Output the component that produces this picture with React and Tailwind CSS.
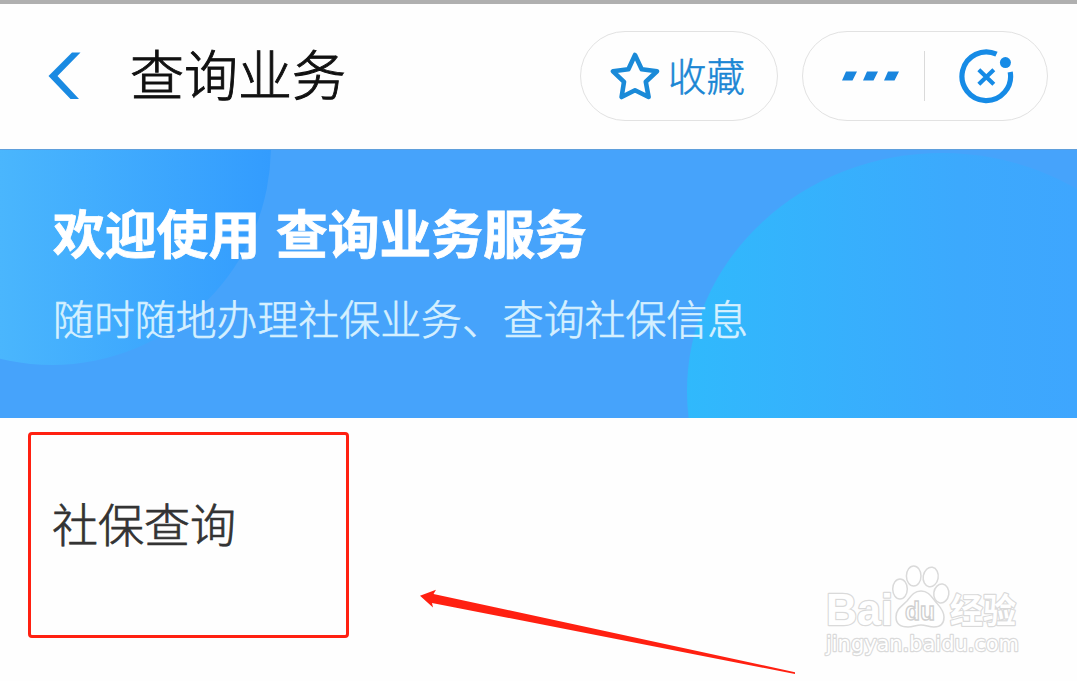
import React from 'react';

const BackIcon = () => (
  <svg className="block h-[48px] w-[34px]" viewBox="0 0 34 48">
    <path d="M24 0.5H32.5L9.5 24L31 47H22.5L0.5 24Z" fill="#1a8ae2" />
  </svg>
);

const StarIcon = () => (
  <svg className="block h-[48px] w-[50px]" viewBox="0 0 50 48">
    <path
      d="M25 3L31.7 17.2L47 19.3L35.8 29.8L38.6 45L25 38.3L11.6 45L14 29.8L3 19.3L18.4 17.2Z"
      fill="none"
      stroke="#1a8ad8"
      strokeWidth="4.6"
      strokeLinejoin="round"
    />
  </svg>
);

const MoreIcon = () => (
  <svg className="block h-[10px] w-[58px]" viewBox="0 0 58 10">
    <path d="M4 0.5H15L10.5 9.5H0Z M25 0.5H36L31.5 9.5H21Z M46 0.5H57L52.5 9.5H42Z" fill="#1a86de" />
  </svg>
);

const CloseIcon = () => (
  <svg className="block h-[56px] w-[56px]" viewBox="0 0 56 56" fill="none" stroke="#168be6">
    <path d="M37.5 5.2A24.3 24.3 0 1 0 51.2 23" strokeWidth="5.2" />
    <path d="M19.8 20.8L34.8 35.2M34.8 20.8L19.8 35.2" strokeWidth="4.2" />
    <circle cx="46.4" cy="13.6" r="5.5" fill="#168be6" stroke="none" />
  </svg>
);

const BannerCircles = () => (
  <svg className="absolute left-0 top-[-1px] h-[269px] w-[1077px]" viewBox="0 0 1077 269">
    <defs>
      <linearGradient id="leftCircle" gradientUnits="userSpaceOnUse" x1="0" y1="0" x2="271" y2="0">
        <stop offset="0" stopColor="#4ab6fd" />
        <stop offset="1" stopColor="#339cfe" />
      </linearGradient>
      <linearGradient id="rightCircle" gradientUnits="userSpaceOnUse" x1="686" y1="0" x2="1077" y2="0">
        <stop offset="0" stopColor="#30b9fc" />
        <stop offset="0.7" stopColor="#3ca9fd" />
        <stop offset="1" stopColor="#3ea6fe" />
      </linearGradient>
    </defs>
    <circle cx="52" cy="-3" r="219" fill="url(#leftCircle)" />
    <ellipse cx="942" cy="242" rx="255" ry="238" fill="url(#rightCircle)" />
  </svg>
);

const Arrow = () => (
  <svg className="absolute left-[420px] top-[171px] h-[86px] w-[376px]" viewBox="0 0 376 86">
    <path d="M0 6.7L16 0.7L13.5 5L375 83.2V85L12 14L13 18.5Z" fill="#ff2011" />
  </svg>
);

// Baidu Jingyan mark, white glyphs with a thin grey outline
const Watermark = () => (
  <svg
    className="absolute left-[815px] top-[142px] h-[105px] w-[215px]"
    viewBox="0 0 215 105"
    fill="#fff"
    stroke="#dadada"
    strokeWidth="1.5"
  >
    <g strokeWidth="2.4" paintOrder="stroke" strokeLinejoin="round">
      <text x="11" y="65" fontSize="44" fontWeight="700" textLength="67" lengthAdjust="spacingAndGlyphs" className="font-['Liberation_Sans',sans-serif]">Bai</text>
      <text x="135" y="63" fontSize="34" fontWeight="700" textLength="66" lengthAdjust="spacingAndGlyphs" className="font-['Noto_Sans_CJK_SC',sans-serif]">经验</text>
      <text x="11" y="91" fontSize="21" textLength="193" lengthAdjust="spacingAndGlyphs" className="font-['DejaVu_Sans',sans-serif]">jingyan.baidu.com</text>
    </g>
    <ellipse cx="85" cy="29" rx="7.3" ry="10" />
    <ellipse cx="98.7" cy="16" rx="7.3" ry="10" />
    <ellipse cx="115.7" cy="17" rx="7.5" ry="9.8" transform="rotate(10 115.7 17)" />
    <ellipse cx="126.3" cy="33.5" rx="7.5" ry="9.5" transform="rotate(8 126.3 33.5)" />
    <path d="M106 31C99 31 96 36 92 41C87 46 81 49 81 57C81 64 86 67 93 67C98 67 101 65 106 65C111 65 114 67 119 67C126 67 129 63 129 57C129 50 124 46 120 41C116 36 113 31 106 31Z" />
    <text x="90" y="60" fontSize="26" fontWeight="700" textLength="30" lengthAdjust="spacingAndGlyphs" strokeWidth="1.4" stroke="#d0d0d0" className="font-['Liberation_Sans',sans-serif]">du</text>
  </svg>
);

const App = () => {
  return (
    <div className="h-[681px] w-[1077px] overflow-hidden border-t-4 border-[#b0b0b0] bg-[#fefefe] font-['Noto_Sans_CJK_SC',sans-serif]">
      <header className="flex h-[145px] items-center pb-[2px] pl-[48px] pr-[29px]">
        <BackIcon />
        <h1 className="mb-[5px] ml-[48px] whitespace-nowrap text-[54px] font-light leading-none text-[#111] [-webkit-text-stroke:0.9px_#111]">查询业务</h1>
        <button className="ml-auto flex h-[90px] w-[198px] items-center rounded-full border border-[#e2e2e2] pl-[29px]">
          <StarIcon />
          <span className="mb-[2px] ml-[8px] whitespace-nowrap text-[38.5px] font-light leading-none text-[#1a86d4] [-webkit-text-stroke:0.5px_#1a86d4]">收藏</span>
        </button>
        <div className="ml-[24px] flex h-[90px] w-[246px] items-center rounded-full border border-[#e2e2e2] pl-[39px]">
          <MoreIcon />
          <span className="ml-[24px] h-[50px] w-px bg-[#dadada]" />
          <span className="ml-[34px] mt-[3px]">
            <CloseIcon />
          </span>
        </div>
      </header>

      <section className="relative h-[269px] overflow-hidden border-t border-[#5f9fdc] bg-[#46a3fb]">
        <BannerCircles />
        <div className="relative whitespace-nowrap pl-[53px] pt-[56px] text-white">
          <h2 className="text-[51.8px] font-bold leading-none [-webkit-text-stroke:0.8px_#fff] [word-spacing:4px]">欢迎使用 查询业务服务</h2>
          <p className="mt-[40px] text-[40.9px] font-light leading-none text-[#d5f0ff] [-webkit-text-stroke:0.6px_#d5f0ff]">随时随地办理社保业务、查询社保信息</p>
        </div>
      </section>

      <main className="relative h-[263px] pl-[28px] pt-[14px]">
        <div className="flex h-[206px] w-[321px] items-center rounded-[4px] border-3 border-[#ff2011] pb-[26px] pl-[21px]">
          <span className="whitespace-nowrap text-[46px] font-light leading-none text-[#333] [-webkit-text-stroke:0.7px_#333]">社保查询</span>
        </div>
        <Arrow />
        <Watermark />
      </main>
    </div>
  );
};

export default App;
